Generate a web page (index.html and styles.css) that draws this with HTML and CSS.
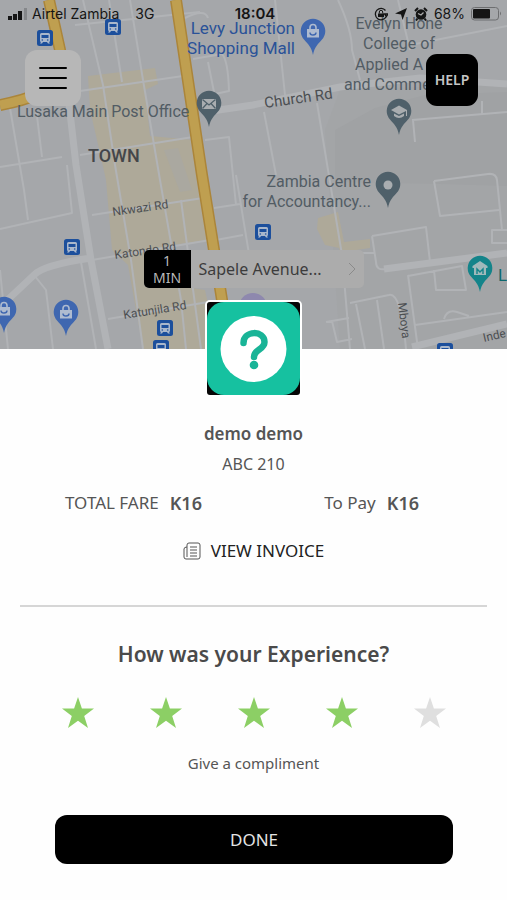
FILE: index.html
```html
<!DOCTYPE html>
<html lang="en">
<head>
<meta charset="utf-8">
<meta name="viewport" content="width=device-width, initial-scale=1">
<title>Rate your trip</title>
<link rel="stylesheet" href="styles.css">
</head>
<body>
<header class="hero">
  <svg class="map" viewBox="0 0 507 349" preserveAspectRatio="xMidYMid slice" role="img" aria-label="Map of Lusaka">
    <defs>
      <g id="bus">
        <rect x="-8" y="-8" width="16" height="16" rx="2.5" fill="#1c4f9c"/>
        <path d="M-3.5-5h7q1.500 0 1.500 1.500v6q0 1.500-1 1.500l1 1.500h-2l-1-1.500h-4l-1 1.500h-2l1-1.500q-1 0-1-1.500v-6q0-1.500 1.500-1.500z" fill="#a9b7cb"/>
        <path d="M-3.500-3h7v3h-7z" fill="#1c4f9c"/>
        <circle cx="-2.700" cy="2" r=".8" fill="#1c4f9c"/><circle cx="2.700" cy="2" r=".8" fill="#1c4f9c"/>
      </g>
      <path id="pin" d="M0 23C-1.500 15-5 12-9 7.500A12.300 12.300 0 1 1 9 7.500C5 12 1.500 15 0 23z"/>
      <g id="bag">
        <use href="#pin" fill="#3f67b0"/>
        <path d="M-6-3H6V5.500H-6z" fill="#aebbd0"/>
        <path d="M-3-3v-1.500a3 3 0 0 1 6 0V-3" fill="none" stroke="#aebbd0" stroke-width="1.600"/>
        <path d="M-3 .5a3 2.500 0 0 0 6 0" fill="none" stroke="#3f67b0" stroke-width="1.400"/>
      </g>
    </defs>
    <rect width="507" height="349" fill="#a5a7aa"/>
    <path d="M340 90L507 84V349H340L325 130z" fill="#a3a5a7"/>
    <path d="M335 130L375 108 425 95 507 92V186L440 184 335 182z" fill="#a0a2a4"/>
    <g fill="#aea999">
      <path d="M88 76L155 68 158 84 145 90 150 136 193 140 204 195 208 240 165 246 172 285 205 290 218 349H143L128 265 112 250 106 180 97 140 90 110z"/>
      <path d="M318 218l20-6 6 30 26-3v9l-14 2 1 16-14-3-4-15-14-3-8-16z"/>
    </g>
    <path d="M164 150l14-2 14 42-12 2z" fill="#aaa8a0"/>
    <g class="roads roads-minor">
      <path d="M83 0L103 85 115 165 131 260 143 349M109 0L122 82M130 0L143 80 160 180 181 300 186 349M75 25L200 12M80 91L183 76M80 155L193 137M92 215L203 198M92 260L210 240M108 319L208 302"/>
      <path d="M0 229L72 213 67 165M0 167L62 157M10 108L24 190 28 220M36 108L42 157M34 275L46 290 53 349M81 262L96 349M0 270L8 349M181 200L201 349M193 59L222 54Q228 60 229 91L210 95M208 62L214 92M185 18Q205 8 208 18"/>
      <path d="M205 140L229 137 236 205M214 208L240 204M216 240L243 235M236 175L250 260M275 0L285 95M264 112L276 175M317 103L342 255 350 349M338 0Q352 30 352 50L360 80M412 120L507 112M482 101V114M413 120L415 142M398 0L410 50M410 45L507 26M341 253H374M434 181L488 174Q496 173 497 180L502 230M434 181L440 216 499 210M372 236L426 227 430 262M372 236L376 262Q376 271 386 269L507 252M507 230h-15v13h15M408 275L418 349M408 276L462 266 466 290 436 290 434 270M350 303L389 295Q401 292 406 349M356 304L365 349M377 300L384 349M326 322L349 318M332 321L337 342 352 339M444 319Q447 309 457 312L469 316M415 325L507 312"/>
    </g>
    <g class="roads roads-main">
      <path d="M68 95L76 165 91 260 108 349M0 307L34 275Q43 265 91 258M205 112L253 105 340 87 420 78 507 84M384 269L507 253M412 347L507 324"/>
    </g>
    <g class="highway highway-edge"><path d="M176 0L202 175 222 300 227 349M49 0L60 50 58 78Q48 96 0 105"/></g>
    <g class="highway highway-fill"><path d="M176 0L202 175 222 300 227 349M49 0L60 50 58 78Q48 96 0 105"/></g>
    <circle cx="253" cy="307" r="14" fill="#8e88ae"/>

    <use href="#bus" x="45" y="38"/><use href="#bus" x="113" y="27"/><use href="#bus" x="72" y="247"/>
    <use href="#bus" x="263" y="232"/><use href="#bus" x="165" y="328"/><use href="#bus" x="161" y="348"/><use href="#bus" x="445" y="351"/>
    <use href="#bag" x="313" y="32"/><use href="#bag" x="66" y="313"/><use href="#bag" x="4" y="310"/>
    <g transform="translate(209 104)">
      <use href="#pin" fill="#4f606a"/>
      <path d="M-7-5H7V5H-7z" fill="#a9adb0"/><path d="M-6.500-4.500L0 1 6.500-4.500M-6.500 4.500L-2-.5M6.500 4.500L2-.5" fill="none" stroke="#4f606a" stroke-width="1.300"/>
    </g>
    <g transform="translate(399 112)">
      <use href="#pin" fill="#4f606a"/>
      <path d="M-8-2L0-6.500 8-2V4H7V-1L0 2.500z" fill="#a9adb0"/><path d="M-5 1.500L0 4 5 1.500V4Q0 8-5 4z" fill="#a9adb0"/>
    </g>
    <g transform="translate(388 185)"><use href="#pin" fill="#4f606a"/><circle r="4.500" fill="#a9adb0"/></g>
    <g transform="translate(480 269)">
      <use href="#pin" fill="#14848a"/>
      <path d="M0-8L7.500-3V-1H-7.500V-3zM-6-1H6V6H-6z" fill="#a0b9bb"/><path d="M-3 5V0L0 3 3 0V5" fill="none" stroke="#14848a" stroke-width="1.400"/>
    </g>

    <g class="label label-place">
      <text x="17" y="117">Lusaka Main Post Office</text>
      <text x="399" y="29" text-anchor="middle">Evelyn Hone</text>
      <text x="399" y="49" text-anchor="middle">College of</text>
      <text x="355" y="70">Applied A</text>
      <text x="344" y="90">and Comme</text>
      <g text-anchor="end"><text x="371" y="187">Zambia Centre</text><text x="371" y="207">for Accountancy...</text></g>
    </g>
    <g class="label label-shop" text-anchor="end"><text x="295" y="34">Levy Junction</text><text x="295" y="54">Shopping Mall</text></g>
    <text class="label label-museum" x="498" y="281">L</text>
    <text class="label label-town" x="88" y="162">TOWN</text>
    <g class="label label-road">
      <text class="label-wide" transform="translate(265 108) rotate(-8)">Church Rd</text>
      <text transform="translate(113 216) rotate(-8)">Nkwazi Rd</text>
      <text transform="translate(115 259) rotate(-8)">Katondo Rd</text>
      <text transform="translate(124 319) rotate(-9)">Katunjila Rd</text>
      <text transform="translate(398 303) rotate(83)">Mboya</text>
      <text class="label-edge" transform="translate(484 342) rotate(-13)">Inde</text>
    </g>
  </svg>

  <div class="status">
    <div class="status-side">
      <svg class="signal" viewBox="0 0 20 12" aria-hidden="true"><path d="M0 8h4v4H0zM5 6h4v6H5zM10 3h4v9h-4z"/><path d="M16 0h3v12h-3z" fill="#85878a"/></svg>
      <span>Airtel Zambia</span><span class="network">3G</span>
    </div>
    <time class="clock">18:04</time>
    <div class="status-side status-right">
      <svg class="glyph" viewBox="0 0 14 14" aria-hidden="true"><path d="M11.500 3.500A5.700 5.700 0 1 0 12 10M10.500 7h3.500l-1.700 2.500z" fill="none" stroke="#151515" stroke-width="1.300"/><path d="M4 6.500h6V10H4z"/><path d="M5.300 6.500V5a1.700 1.700 0 0 1 3.400 0v1.500" fill="none" stroke="#151515"/></svg>
      <svg class="glyph" viewBox="0 0 14 14" aria-hidden="true"><path d="M13 1L8.500 13 7 7.500 1 6.500z"/></svg>
      <svg class="glyph" viewBox="0 0 14 14" aria-hidden="true"><circle cx="7" cy="7.500" r="5.300"/><path d="M1 4L4 1M13 4L10 1M3.500 11.500L2 13.500M10.500 11.500L12 13.500" stroke="#151515" stroke-width="2"/><path d="M4 6.500L7 8 9.500 5.500" fill="none" stroke="#aaa" stroke-width="1.300"/></svg>
      <span>68%</span>
      <svg class="battery" viewBox="0 0 31 14" aria-hidden="true"><rect x=".5" y=".5" width="27" height="12.500" rx="3" fill="none" stroke="#6d6e70"/><rect x="2" y="2" width="17" height="9.500" rx="1"/><path d="M29 4.500q2 2 0 4z" fill="#6d6e70"/></svg>
    </div>
  </div>

  <nav class="toolbar">
    <button class="menu" type="button" aria-label="Menu">
      <svg viewBox="0 0 28 24" aria-hidden="true"><path d="M1 2h26M1 12h26M1 22h26"/></svg>
    </button>
    <button class="help" type="button">HELP</button>
  </nav>

  <button class="pickup" type="button">
    <span class="eta"><span>1</span><span>MIN</span></span>
    <span class="address">Sapele Avenue...
      <svg viewBox="0 0 8 14" aria-hidden="true"><path d="M1 1l6 6-6 6"/></svg>
    </span>
  </button>
</header>

<main class="sheet">
  <svg class="avatar" viewBox="0 0 93 93" role="img" aria-label="Driver photo">
    <rect width="93" height="93" fill="#060606"/>
    <rect width="93" height="93" rx="17" fill="#16c1a0"/>
    <circle cx="46.500" cy="47" r="33" fill="#fff"/>
    <path d="M36.500 41C36.500 28 57.500 28 57.500 40C57.500 48 47 47 47 55" fill="none" stroke="#19b497" stroke-width="6.500" stroke-linecap="round"/>
    <circle cx="47" cy="63" r="4.300" fill="#19b497"/>
  </svg>
  <h1 class="driver">demo demo</h1>
  <p class="plate">ABC 210</p>

  <dl class="fares">
    <div class="fare"><dt>TOTAL FARE</dt><dd>K16</dd></div>
    <div class="fare"><dt>To Pay</dt><dd>K16</dd></div>
  </dl>

  <a class="invoice" href="#invoice">
    <svg viewBox="0 0 18 18" aria-hidden="true"><path d="M4 5V3q0-2 2-2h9q2 0 2 2v12q0 2-2 2H3q-2 0-2-2V7q0-2 3-2zM4 5v10M7 5h7M7 8h7M7 11h7M7 14h7"/></svg>
    VIEW INVOICE
  </a>

  <hr class="divider">

  <form class="review">
    <h2 class="question" id="question">How was your Experience?</h2>
    <div class="stars" role="radiogroup" aria-labelledby="question">
      <input type="radio" name="rating" id="star1" value="1"><label for="star1" aria-label="1 star"><svg viewBox="0 0 32 32"><path d="M16 0l3.900 11.600H32l-9.800 7.300L26 31l-10-7.300L6 31l3.800-12.100L0 11.600h12.100z"/></svg></label>
      <input type="radio" name="rating" id="star2" value="2"><label for="star2" aria-label="2 stars"><svg viewBox="0 0 32 32"><path d="M16 0l3.900 11.600H32l-9.800 7.300L26 31l-10-7.300L6 31l3.800-12.100L0 11.600h12.100z"/></svg></label>
      <input type="radio" name="rating" id="star3" value="3"><label for="star3" aria-label="3 stars"><svg viewBox="0 0 32 32"><path d="M16 0l3.900 11.600H32l-9.800 7.300L26 31l-10-7.300L6 31l3.800-12.100L0 11.600h12.100z"/></svg></label>
      <input type="radio" name="rating" id="star4" value="4" checked><label for="star4" aria-label="4 stars"><svg viewBox="0 0 32 32"><path d="M16 0l3.900 11.600H32l-9.800 7.300L26 31l-10-7.300L6 31l3.800-12.100L0 11.600h12.100z"/></svg></label>
      <input type="radio" name="rating" id="star5" value="5"><label for="star5" aria-label="5 stars"><svg viewBox="0 0 32 32"><path d="M16 0l3.900 11.600H32l-9.800 7.300L26 31l-10-7.300L6 31l3.800-12.100L0 11.600h12.100z"/></svg></label>
    </div>
    <a class="compliment" href="#compliment">Give a compliment</a>
    <button class="done" type="button">DONE</button>
  </form>
</main>
</body>
</html>
```
FILE: styles.css
```css
* { box-sizing: border-box; }

body {
  margin: 0;
  min-height: 100vh;
  background: #fefefe;
  color: #555;
  font-family: "Noto Sans", "Open Sans", sans-serif;
  font-size: 16px;
  line-height: 24px;
}

h1, h2, p, dl, dd { margin: 0; }
button { border: 0; padding: 0; font: inherit; cursor: pointer; }
a { color: inherit; text-decoration: none; }

/* Map area */
.hero {
  position: relative;
  isolation: isolate;
  overflow: hidden;
  padding-bottom: 61px;
}
.map {
  position: absolute;
  inset: 0;
  z-index: -1;
  width: 100%;
  height: 100%;
}
.roads { fill: none; stroke: #b1b3b6; stroke-linejoin: round; }
.roads-minor { stroke-width: 2; }
.roads-main { stroke-width: 7; }
.highway { fill: none; stroke-linejoin: round; }
.highway-edge { stroke: #ab853a; stroke-width: 12; }
.highway-fill { stroke: #bf9f50; stroke-width: 9; }
.label { font-family: Roboto, Inter, sans-serif; font-size: 17px; }
.label-place { fill: #525c64; font-size: 16px; }
.label-shop { fill: #2a5298; }
.label-museum { fill: #0d686d; }
.label-town { fill: #444649; font-size: 18px; font-weight: 500; }
.label-road { fill: #4c4f52; font-size: 12px; }
.label-wide { font-size: 15px; }
.label-edge { font-size: 12px; }

/* Status bar */
.status {
  display: grid;
  grid-template-columns: 1fr auto 1fr;
  align-items: center;
  height: 28px;
  padding: 0 5px 0 8px;
  color: #151515;
  font-family: Inter, Roboto, sans-serif;
  font-size: 14px;
}
.status svg { fill: #151515; }
.status-side { display: flex; align-items: center; gap: 4px; white-space: nowrap; }
.status-right { justify-content: flex-end; gap: 6px; }
.network { margin-left: 12px; }
.clock { font-size: 15px; font-weight: 600; }
.signal { width: 20px; height: 12px; }
.glyph { width: 14px; height: 14px; }
.battery { width: 31px; height: 14px; }

/* Floating controls */
.toolbar {
  display: flex;
  justify-content: space-between;
  align-items: center;
  margin-top: 22px;
  padding: 0 29px 0 25px;
}
.menu {
  display: grid;
  place-items: center;
  width: 56px;
  height: 56px;
  border-radius: 12px;
  background: #b7b7b7;
}
.menu svg { width: 28px; height: 24px; fill: none; stroke: #000; stroke-width: 2; stroke-linecap: round; }
.help {
  width: 52px;
  height: 52px;
  margin-top: 4px;
  border-radius: 11px;
  background: #000;
  color: #c4c4c4;
  font-size: 14px;
  font-weight: 600;
}
.pickup {
  display: flex;
  width: 220px;
  height: 38px;
  margin: 144px auto 0;
  border-radius: 5px;
  overflow: hidden;
  background: #acacac;
  color: #3c3c3c;
  text-align: left;
}
.eta {
  display: flex;
  flex-direction: column;
  justify-content: center;
  align-items: center;
  width: 47px;
  background: #000;
  color: #b8b8b8;
  font-size: 14px;
  line-height: 17px;
}
.address {
  display: flex;
  flex: 1;
  justify-content: space-between;
  align-items: center;
  padding: 0 8px;
  white-space: nowrap;
}
.address svg { width: 8px; height: 14px; fill: none; stroke: #8a8a8a; stroke-width: 1; }

/* Trip summary */
.sheet {
  position: relative;
  display: flex;
  flex-direction: column;
  align-items: center;
  padding: 0 20px 36px;
}
.avatar {
  width: 97px;
  height: 97px;
  margin-top: -49px;
  border: 2px solid #fff;
  border-radius: 5px;
}
.driver { margin-top: 25px; font-size: 17px; font-weight: 600; line-height: 24px; }
.plate { margin-top: 6px; font-size: 16px; }
.fares {
  display: flex;
  justify-content: space-between;
  width: 100%;
  margin-top: 15px;
  padding: 0 68px 0 45px;
  font-size: 17px;
}
.fare { display: flex; gap: 11px; }
.fare dd { font-size: 18px; font-weight: 600; }
.invoice { display: flex; align-items: center; gap: 10px; margin-top: 24px; color: #222; font-size: 17px; }
.invoice svg { width: 18px; height: 18px; fill: none; stroke: #555; stroke-width: 1; }
.divider { width: 100%; margin: 42px 0 0; border: 0; border-top: 2px solid #d6d6d6; }

/* Rating */
.review { display: flex; flex-direction: column; align-items: center; width: 100%; margin-top: 35px; }
.question { color: #4a4a4a; font-size: 21px; font-weight: 600; line-height: 24px; }
.stars { position: relative; display: flex; gap: 56px; margin-top: 31px; }
.stars input { position: absolute; opacity: 0; pointer-events: none; }
.stars label { width: 32px; height: 32px; cursor: pointer; }
.stars svg { display: block; width: 32px; height: 32px; fill: #8ccf65; }
.stars input:checked + label ~ label svg { fill: #dfdfdf; }
.compliment { margin-top: 22px; font-size: 15px; }
.done {
  align-self: stretch;
  height: 49px;
  margin: 40px 34px 0 35px;
  border-radius: 12px;
  background: #000;
  color: #e4e4e4;
  font-size: 17px;
}
```
